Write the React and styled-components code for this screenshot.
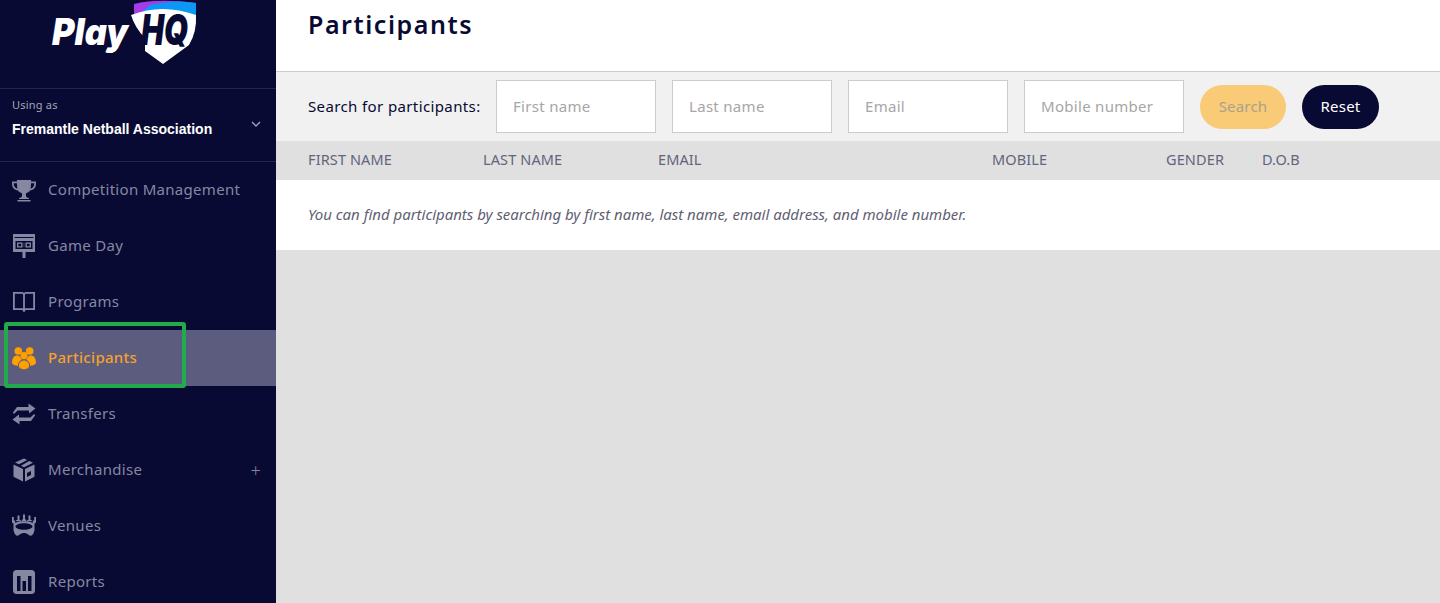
import React from "react";
import styled, { createGlobalStyle } from "styled-components";

const Global = createGlobalStyle`
  html, body { margin: 0; padding: 0; height: 100%; overflow: hidden; }
  body { font-family: "Noto Sans", "Open Sans", sans-serif; background: #e0e0e0; }
  * { box-sizing: border-box; }
`;

const Page = styled.div`
  display: flex;
  width: 1440px;
  height: 603px;
  overflow: hidden;
  position: relative;
`;

const Sidebar = styled.aside`
  width: 276px;
  flex: none;
  background: #080a33;
  color: #fff;
  display: flex;
  flex-direction: column;
`;

const LogoArea = styled.div`
  height: 88px;
  flex: none;
  padding-left: 50px;
`;

const OrgBlock = styled.div`
  height: 74px;
  flex: none;
  border-top: 1px solid #24264a;
  border-bottom: 1px solid #24264a;
  padding: 9px 12px 0;
`;

const UsingAs = styled.div`
  font-size: 11px;
  line-height: 14px;
  letter-spacing: 0.2px;
  color: #a4a5b6;
`;

const OrgRow = styled.div`
  display: flex;
  justify-content: space-between;
  align-items: flex-start;
  margin-top: 9px;
`;

const OrgName = styled.div`
  font-family: "Liberation Sans", Arial, sans-serif;
  font-size: 14px;
  font-weight: 700;
  line-height: 16px;
  color: #fff;
`;

const Chevron = styled.svg`
  width: 10px;
  height: 6px;
  margin: 0 3px 0 0;
`;

const NavItem = styled.div`
  height: 56px;
  flex: none;
  display: flex;
  align-items: center;
  padding: 0 15px 0 12px;
  gap: 12px;
  font-size: 15px;
  letter-spacing: 0.3px;
  color: ${(p) => (p.$active ? "#f7a12c" : "#8688a2")};
  background: ${(p) => (p.$active ? "#5c5c7e" : "transparent")};
`;

const NavIcon = styled.svg`
  width: 24px;
  height: 24px;
  flex: none;
  fill: ${(p) => (p.$active ? "#fea000" : "#8688a2")};
`;

const NavLabel = styled.span`
  flex: 1;
  padding-bottom: 2px;
  font-weight: ${(p) => (p.$active ? 500 : 400)};
`;

const Plus = styled.span`
  font-size: 18px;
  font-weight: 300;
  line-height: 18px;
  margin-right: 0;
  color: #8688a2;
`;

const Highlight = styled.div`
  position: absolute;
  left: 4px;
  top: 322px;
  width: 182px;
  height: 66px;
  border: 4px solid #22ab4a;
  border-radius: 3px;
  pointer-events: none;
`;

const Main = styled.main`
  flex: 1;
  min-width: 0;
  display: flex;
  flex-direction: column;
  background: #e0e0e0;
`;

const TitleBar = styled.header`
  height: 71px;
  flex: none;
  background: #fff;
  padding: 7px 32px 0;
`;

const Title = styled.h1`
  margin: 0;
  font-size: 25px;
  line-height: 34px;
  font-weight: 600;
  letter-spacing: 1.55px;
  color: #080a33;
`;

const Toolbar = styled.div`
  height: 70px;
  flex: none;
  background: #f1f1f1;
  border-top: 1px solid #ccc;
  display: flex;
  align-items: center;
  padding: 0 0 0 32px;
  gap: 16px;
`;

const SearchLabel = styled.label`
  width: 172px;
  flex: none;
  padding-bottom: 2px;
  font-size: 15px;
  letter-spacing: 0.38px;
  color: #080a33;
  white-space: nowrap;
`;

const Field = styled.input`
  width: 160px;
  height: 53px;
  flex: none;
  border: 1px solid #ccc;
  border-radius: 0;
  background: #fff;
  padding: 0 16px 2px;
  font: inherit;
  font-size: 15px;
  letter-spacing: 0.3px;
  outline: none;
  &::placeholder { color: #a6a6a6; opacity: 1; }
`;

const Pill = styled.button`
  height: 44px;
  width: ${(p) => p.$w}px;
  flex: none;
  border: 0;
  border-radius: 22px;
  padding: 0 0 1px;
  font: inherit;
  font-size: 15px;
  letter-spacing: 0.2px;
  background: ${(p) => (p.$primary ? "#f9cb76" : "#080a33")};
  color: ${(p) => (p.$primary ? "#a9a18f" : "#fff")};
`;

const Columns = styled.div`
  height: 39px;
  flex: none;
  display: grid;
  grid-template-columns: 175px 175px 334px 174px 96px 1fr;
  align-items: center;
  padding: 0 0 3px 32px;
  background: #e0e0e0;
  font-size: 14.5px;
  letter-spacing: 0.12px;
  color: #64647c;
`;

const Note = styled.div`
  height: 70px;
  flex: none;
  display: flex;
  align-items: center;
  padding: 0 0 2px 32px;
  background: #fff;
  font-size: 15px;
  letter-spacing: -0.02px;
  font-style: italic;
  color: #5f5f72;
`;

const Play = styled.text`
  font-family: Inter, "Noto Sans", sans-serif;
  font-weight: 900;
  font-style: italic;
  font-size: 37px;
  fill: #fff;
`;

const Hq = styled.text`
  font-family: Inter, "Noto Sans", sans-serif;
  font-weight: 900;
  font-style: italic;
  font-size: 42px;
  fill: #080a33;
`;

const Logo = () => (
  <svg width="170" height="68" viewBox="0 0 170 68">
    <Play x="2" y="45" textLength="76" lengthAdjust="spacingAndGlyphs">Play</Play>
    <path d="M84 4 Q108 -2 146 3 L146 16 Q112 9 84 14Z" fill="#a63bea" />
    <path d="M100 5 Q124 -1 146 3 L146 16 Q122 8 92 12Z" fill="#0d97f5" />
    <path d="M81 15 Q112 3 146 15 Q147 32 139 45 L113 64 L95 51 L95 38 Q85 28 81 15Z" fill="#fff" />
    <Hq x="91" y="45" textLength="47" lengthAdjust="spacingAndGlyphs">HQ</Hq>
  </svg>
);

const Trophy = (p) => (
  <NavIcon viewBox="0 0 24 24" {...p}>
    <path fillRule="evenodd" d="M5 2h14v1.500h5V6c0 3.500-2.500 6-6 6.600-1 1.400-2.300 2.300-4 2.700V18c.2 1 1 1.700 3 1.900V21H7v-1.100c2-.2 2.800-.9 3-1.900v-2.700c-1.700-.4-3-1.300-4-2.700C2.500 12 0 9.500 0 6V3.500h5V2zM1.700 5.300V6c0 2.300 1.500 4.100 3.700 4.800C5.100 9.100 5 7.200 5 5.300H1.700zm17.300 0c0 1.900-.1 3.800-.4 5.500 2.200-.7 3.700-2.500 3.700-4.800v-.7H19zM5.500 22h13v1.500h-13z" />
  </NavIcon>
);

const Scoreboard = (p) => (
  <NavIcon viewBox="0 0 24 24" {...p}>
    <path fillRule="evenodd" d="M1.500 0h21c.5 0 .5.500.5.500V18H13.500v6h-3v-6H1V.500S1 0 1.500 0zM2.500 3v1h19V3h-19zM3.500 7v8h17V7h-17z" />
    <path fillRule="evenodd" d="M5 8.500h5.500v5H5v-5zm1.300 1.200v2.600h2.900V9.700H6.300zM13.500 8.500H19v5h-5.500v-5zm1.300 1.200v2.600h2.900V9.700h-2.900zM11.500 9.500h1v1h-1zM11.500 11.500h1v1h-1z" />
  </NavIcon>
);

const Book = (p) => (
  <NavIcon viewBox="0 0 24 24" {...p}>
    <path fillRule="evenodd" d="M1 2h9c.9 0 1.600.3 2 .9.400-.6 1.100-.9 2-.9h9v18h-9.300L12 22.500 10.300 20H1V2zm1.800 1.800v14.400h8.300V5.200c0-.8-.4-1.400-1.200-1.400H2.800zm18.400 0H14.100c-.8 0-1.200.6-1.200 1.400v13h8.300V3.800z" />
  </NavIcon>
);

const People = (p) => (
  <NavIcon viewBox="0 0 24 24" {...p}>
    <circle cx="6.300" cy="5" r="3.800" />
    <circle cx="17.700" cy="5" r="3.800" />
    <circle cx="12" cy="9.700" r="3.600" />
    <path d="M0 16.500C0 12 2.300 9.500 5 9.500c1.300 0 2.300.4 3 1 .4 1.400 1 2.500 1.900 3.300C7.500 15 6 17 5.800 19.800 2.500 19.600 0 18.500 0 16.500zM24 16.500c0-4.500-2.300-7-5-7-1.300 0-2.300.4-3 1-.4 1.400-1 2.500-1.900 3.300 2.400 1.200 3.900 3.200 4.100 6 3.300-.2 5.800-1.300 5.800-3.300zM6.800 20c0-3.200 2.300-5.500 5.200-5.500s5.200 2.300 5.200 5.500c0 1.900-2.400 3.200-5.200 3.200S6.800 21.900 6.800 20z" />
  </NavIcon>
);

const Arrows = (p) => (
  <NavIcon viewBox="0 0 24 24" {...p}>
    <path d="M16.500 1.500L23.500 6.500l-6.500 5V8.500H5.500L2.500 11.500H1V10.500L5 5h11.500z" />
    <path d="M7.500 22.500L.5 17.500l6.500-5V15.500h11.500l3-3H23v1L19 19H7.500z" />
  </NavIcon>
);

const Box = (p) => (
  <NavIcon viewBox="0 0 24 24" {...p}>
    <path fillRule="evenodd" d="M12 .500l3.200 1.500-8.200 4.300L3 4.600 12 .500zM17.300 3l3.700 1.700-9 4.500-3-1.400L17.300 3zM1.500 6.500L11 10.900V23.500L2 19c-.4-.2-.5-.5-.5-.9V6.500zM22.500 6.500v11.600c0 .4-.1.700-.5.900l-9 4.500V10.900l9.500-4.400zM15 15v4l4-2v-4l-4 2z" />
  </NavIcon>
);

const Venue = (p) => (
  <NavIcon viewBox="0 0 24 24" {...p}>
    <path fillRule="evenodd" d="M0 3h1.800v3.500H3.200V9c2-1.200 5.200-1.700 8.800-1.700S18.800 7.800 20.800 9V6.500h1.400V3H24v5.500l-1.500 1V15c0 2.500-1 5.500-3 6.500-2.500 1-3.500-2.500-7.500-2.500s-5 3.500-7.500 2.500c-2-1-3-4-3-6.500V9.500L0 8.500V3zM5.500 1.500h2V6h1.300v1.300H4.200V6h1.300V1.500zM11 .500h2V5.500h1.200V7h-4.400V5.500H11V.500zM16.500 1.500h2V6h1.300v1.300h-4.600V6h1.300V1.500zM3.500 12.500c0 1.800 3.800 3.200 8.500 3.200s8.500-1.400 8.500-3.200-3.800-3.200-8.500-3.200-8.500 1.400-8.500 3.200z" />
  </NavIcon>
);

const Report = (p) => (
  <NavIcon viewBox="0 0 24 24" {...p}>
    <path fillRule="evenodd" d="M4.500 0h15C21.500 0 23 1.500 23 3.500v17c0 2-1.500 3.500-3.500 3.500h-15C2.500 24 1 22.500 1 20.500v-17C1 1.500 2.500 0 4.500 0zM5 6v15h3.500V6H5zm5.500 5v10H14V11h-3.500zM16 6v15h3.500V6H16z" />
  </NavIcon>
);

const nav = [
  [Trophy, "Competition Management"],
  [Scoreboard, "Game Day"],
  [Book, "Programs"],
  [People, "Participants", true],
  [Arrows, "Transfers"],
  [Box, "Merchandise", false, true],
  [Venue, "Venues"],
  [Report, "Reports"],
];

const columns = ["FIRST NAME", "LAST NAME", "EMAIL", "MOBILE", "GENDER", "D.O.B"];
const fields = ["First name", "Last name", "Email", "Mobile number"];

export default function App() {
  return (
    <Page>
      <Global />
      <Sidebar>
        <LogoArea><Logo /></LogoArea>
        <OrgBlock>
          <UsingAs>Using as</UsingAs>
          <OrgRow>
            <OrgName>Fremantle Netball Association</OrgName>
            <Chevron viewBox="0 0 10 6"><path d="M1 1l4 4 4-4" fill="none" stroke="#a4a5b6" strokeWidth="1.300" /></Chevron>
          </OrgRow>
        </OrgBlock>
        {nav.map(([Icon, label, active, plus]) => (
          <NavItem key={label} $active={active}>
            <Icon $active={active} />
            <NavLabel $active={active}>{label}</NavLabel>
            {plus && <Plus>+</Plus>}
          </NavItem>
        ))}
      </Sidebar>
      <Main>
        <TitleBar><Title>Participants</Title></TitleBar>
        <Toolbar>
          <SearchLabel>Search for participants:</SearchLabel>
          {fields.map((f) => <Field key={f} placeholder={f} />)}
          <Pill $primary $w={86}>Search</Pill>
          <Pill $w={77}>Reset</Pill>
        </Toolbar>
        <Columns>{columns.map((c) => <span key={c}>{c}</span>)}</Columns>
        <Note>You can find participants by searching by first name, last name, email address, and mobile number.</Note>
      </Main>
      <Highlight />
    </Page>
  );
}
